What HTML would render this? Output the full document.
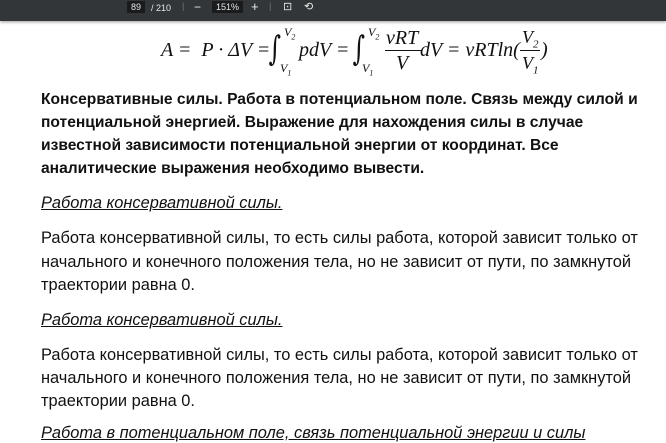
<!DOCTYPE html>
<html><head><meta charset="utf-8"><style>
body{margin:0;width:666px;height:436px;overflow:hidden;background:#fff;position:relative;font-family:"Liberation Sans",sans-serif;color:#111}
.tb{position:absolute;left:0;top:0;width:666px;height:21px;background:#323639;box-shadow:0 1px 3px rgba(0,0,0,.4)}
.tb span{position:absolute;color:#e8e8e8;font-size:9px;top:3px}
.box{background:#191b1c;padding:1px 4px}
.f{position:absolute;font-family:"Liberation Serif",serif;font-style:italic;font-size:20px;color:#111;white-space:nowrap;line-height:22px}
.s{font-size:12px;line-height:14px}
.i{position:absolute;font-family:"DejaVu Serif",serif;font-size:34px;line-height:50px;color:#111;transform:scaleX(.7)}
.l{position:absolute;left:41px;font-size:16.4px;white-space:nowrap;line-height:20px}
.b{font-weight:bold;font-size:15.6px}
.h{font-style:italic;text-decoration:underline}
</style></head><body>
<div class="tb">
<span class="box" style="left:127px;top:1px">89</span><span style="left:151px">/ 210</span>
<span style="left:182px;top:1px;color:#777">|</span>
<span style="left:194px;top:0;font-size:12px">−</span>
<span class="box" style="left:212px;top:1px">151%</span>
<span style="left:251px;top:-1px;font-size:13px">+</span>
<span style="left:269px;top:1px;color:#777">|</span>
<span style="left:283px;top:0;font-size:11px">⊡</span>
<span style="left:304px;top:0;font-size:11px">⟲</span>
</div>
<div class="f" style="left:161px;top:39px">A = &nbsp;P · ΔV =</div>
<div class="i" style="left:266px;top:24px">∫</div>
<div class="f s" style="left:284px;top:25px">V<sub style="font-size:8px">2</sub></div>
<div class="f s" style="left:280px;top:61px">V<sub style="font-size:8px">1</sub></div>
<div class="f" style="left:299px;top:39px">pdV =</div>
<div class="i" style="left:350px;top:24px">∫</div>
<div class="f s" style="left:368px;top:25px">V<sub style="font-size:8px">2</sub></div>
<div class="f s" style="left:362px;top:61px">V<sub style="font-size:8px">1</sub></div>
<div class="f" style="left:386px;top:27px">νRT</div>
<div style="position:absolute;left:385px;top:50px;width:36px;height:1px;background:#111"></div>
<div class="f" style="left:396px;top:52px">V</div>
<div class="f" style="left:420px;top:39px">dV = νRTln(</div>
<div class="f" style="left:522px;top:26px;font-size:18px">V<sub style="font-size:11px">2</sub></div>
<div style="position:absolute;left:520px;top:50px;width:20px;height:1px;background:#111"></div>
<div class="f" style="left:522px;top:52px;font-size:18px">V<sub style="font-size:11px">1</sub></div>
<div class="f" style="left:541px;top:39px">)</div>

<div class="l b" style="top:90px">Консервативные силы. Работа в потенциальном поле. Связь между силой и</div>
<div class="l b" style="top:113px">потенциальной энергией. Выражение для нахождения силы в случае</div>
<div class="l b" style="top:136px">известной зависимости потенциальной энергии от координат. Все</div>
<div class="l b" style="top:159px">аналитические выражения необходимо вывести.</div>
<div class="l h" style="top:193px">Работа консервативной силы.</div>
<div class="l" style="top:228px">Работа консервативной силы, то есть силы работа, которой зависит только от</div>
<div class="l" style="top:252px">начального и конечного положения тела, но не зависит от пути, по замкнутой</div>
<div class="l" style="top:275px">траектории равна 0.</div>
<div class="l h" style="top:310px">Работа консервативной силы.</div>
<div class="l" style="top:345px">Работа консервативной силы, то есть силы работа, которой зависит только от</div>
<div class="l" style="top:368px">начального и конечного положения тела, но не зависит от пути, по замкнутой</div>
<div class="l" style="top:391px">траектории равна 0.</div>
<div class="l h" style="top:423px">Работа в потенциальном поле, связь потенциальной энергии и силы</div>
</body></html>
